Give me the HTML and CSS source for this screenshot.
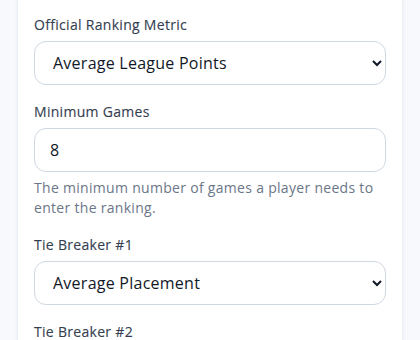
FILE: index.html
```
<!DOCTYPE html>
<html lang="en">
<head>
  <meta charset="UTF-8" />
  <title>Ranking Settings</title>
  <link rel="stylesheet" href="styles.css">
</head>
<body>
  <div class="card">
    <div class="field">
      <label for="metric">Official Ranking Metric</label>
      <select id="metric">
        <option>Average League Points</option>
        <option>Total League Points</option>
      </select>
    </div>
    <div class="field">
      <label for="min-games">Minimum Games</label>
      <input id="min-games" type="text" value="8">
      <p class="help">The minimum number of games a player needs to enter the ranking.</p>
    </div>
    <div class="field">
      <label for="tie1">Tie Breaker #1</label>
      <select id="tie1">
        <option>Average Placement</option>
      </select>
    </div>
    <div class="field">
      <label for="tie2">Tie Breaker #2</label>
      <select id="tie2">
        <option>Wins</option>
      </select>
    </div>
  </div>
</body>
</html>
```

FILE: styles.css
```
* {
  margin: 0;
  padding: 0;
  box-sizing: border-box;
  font-family: 'Open Sans', sans-serif;
}

body {
  background: #f7f9fc;
  padding: 0 17px;
}

.card {
  background: #fff;
  border-left: 1px solid #eceff4;
  border-right: 1px solid #eceff4;
  box-shadow: 0 0 4px rgba(30, 50, 90, 0.06);
  padding: 16px 16px 20px;
  margin-top: -1px;
}

.field {
  margin-bottom: 17px;
}

label {
  display: block;
  font-size: 14px;
  line-height: 20px;
  letter-spacing: 0.3px;
  color: #343e50;
  -webkit-text-stroke: 0.12px #343e50;
  margin-bottom: 6px;
}

select,
input {
  display: block;
  width: 100%;
  height: 44px;
  border: 1px solid #cfd8e3;
  border-radius: 12px;
  background: #fff;
  font-size: 16px;
  letter-spacing: 0.25px;
  color: #111827;
  padding: 0 14px;
}

input {
  padding: 0 15px;
}

.help {
  margin-top: 6px;
  font-size: 14px;
  line-height: 20px;
  letter-spacing: 0.3px;
  color: #6b7688;
}
```
